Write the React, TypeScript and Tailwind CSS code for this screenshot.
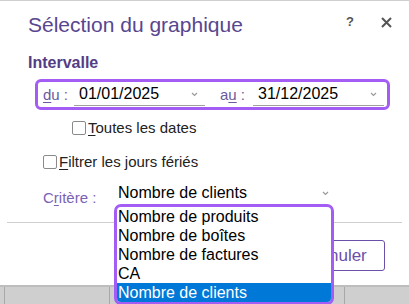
const font = { fontFamily: '"Liberation Sans", Arial, sans-serif' };

function Chevron() {
    return (
        <svg width="7" height="5" viewBox="0 0 7 5" className="shrink-0">
            <path d="M1 1 L3.5 3.5 L6 1" fill="none" stroke="#9a9a9a" strokeWidth="1.2" />
        </svg>
    );
}

function DateField({ value }: { value: string }) {
    return (
        <div className="flex items-center h-[22px] w-[131px] border-b border-[#a0a0a0] pl-[5px] pr-[7px]">
            <span className="flex-1 text-[16px] text-black leading-none">{value}</span>
            <Chevron />
        </div>
    );
}

function Checkbox({ label, rest }: { label: string; rest: string }) {
    return (
        <label className="flex items-center">
            <span className="w-[14px] h-[14px] border border-[#8a8a8a] rounded-[2px] bg-white mr-[2px]" />
            <span className="text-[15px] text-[#222] leading-none">
                <span className="underline underline-offset-2">{label}</span>
                {rest}
            </span>
        </label>
    );
}

const options = ["Nombre de produits", "Nombre de boîtes", "Nombre de factures", "CA", "Nombre de clients"];

export default function App() {
    return (
        <div className="relative w-[409px] h-[304px] overflow-hidden bg-white flex flex-col" style={font}>
            <div className="border-t border-[#cfcfcf]" />
            <div className="flex items-center h-[42px] pl-[28px] pr-[17px]">
                <h1 className="flex-1 text-[21px] text-[#58468f] leading-none pt-[4px]">Sélection du graphique</h1>
                <span className="text-[13px] font-bold text-[#555] mr-[27px]">?</span>
                <svg width="11" height="11" viewBox="0 0 11 11">
                    <path d="M1 1 L10 10 M10 1 L1 10" stroke="#555" strokeWidth="2" />
                </svg>
            </div>

            <div className="pl-[28px] pt-[12px] text-[16px] font-bold text-[#533d85] leading-none">Intervalle</div>

            <div className="mt-[8px] ml-[35px] w-[355px] h-[31px] border-[3px] border-[#a35df5] rounded-[6px] flex items-center pl-[5px]">
                <span className="text-[15px] text-[#6b5a9c] w-[31px] leading-none">
                    <span className="underline underline-offset-2">d</span>u :
                </span>
                <DateField value="01/01/2025" />
                <span className="text-[15px] text-[#6b5a9c] w-[33px] ml-[15px] leading-none">
                    a<span className="underline underline-offset-2">u</span> :
                </span>
                <DateField value="31/12/2025" />
            </div>

            <div className="pl-[72px] mt-[10px]">
                <Checkbox label="T" rest="outes les dates" />
            </div>
            <div className="pl-[43px] mt-[19px]">
                <Checkbox label="F" rest="iltrer les jours fériés" />
            </div>

            <div className="flex items-center pl-[43px] mt-[13px] h-[22px]">
                <span className="text-[15px] text-[#7b62b5] w-[75px] leading-none pt-[8px]">
                    C<span className="underline underline-offset-2">r</span>itère :
                </span>
                <div className="flex items-center w-[216px] pr-[5px]">
                    <span className="flex-1 text-[16px] text-black leading-none">Nombre de clients</span>
                    <Chevron />
                </div>
            </div>

            <div className="mt-[18px] mx-[7px] border-t border-[#cfcfcf]" />

            <div className="flex justify-end pr-[24px] mt-[17px]">
                <button className="h-[31px] w-[95px] border border-[#6b4fa8] rounded-[3px] text-[17px] text-[#6b4fa8]">
                    Annuler
                </button>
            </div>

            <div className="mt-auto h-[19px] bg-[#cfcfcf] border-t-2 border-[#bdbdbd] flex">
                <div className="w-[5px] border-r border-[#a8a8a8]" />
                <div className="w-[105px] border-r border-[#a8a8a8]" />
                <div className="w-[235px] border-r border-[#a8a8a8]" />
            </div>

            <ul className="absolute left-[114px] top-[204px] w-[220px] h-[101px] border-[3px] border-[#a35df5] rounded-[7px] bg-white overflow-hidden">
                {options.map((o, i) => (
                    <li
                        key={o}
                        className={`h-[19px] pl-[1px] text-[16px] leading-[19px] ${i === options.length - 1 ? "bg-[#0078d7] text-white" : "text-black"}`}
                    >
                        {o}
                    </li>
                ))}
            </ul>
        </div>
    );
}
